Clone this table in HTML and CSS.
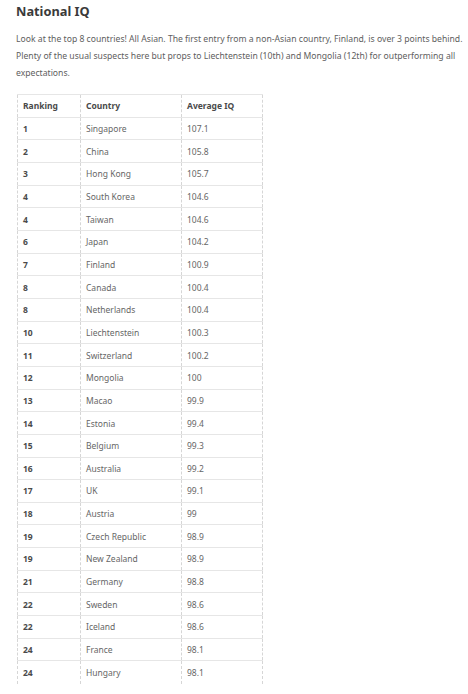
FILE: index.html
```html
<!DOCTYPE html>
<html>
<head>
<meta charset="utf-8">
<link rel="stylesheet" href="styles.css">
</head>
<body>
<div class="page">
<h1 class="title">National IQ</h1>
<p class="intro">Look at the top 8 countries! All Asian. The first entry from a non-Asian country, Finland, is over 3 points behind. Plenty of the usual suspects here but props to Liechtenstein (10th) and Mongolia (12th) for outperforming all expectations.</p>
<table class="iq">
<thead><tr><th class="c1">Ranking</th><th class="c2">Country</th><th class="c3">Average IQ</th></tr></thead>
<tbody>
<tr><td class="rank">1</td><td>Singapore</td><td>107.1</td></tr>
<tr><td class="rank">2</td><td>China</td><td>105.8</td></tr>
<tr><td class="rank">3</td><td>Hong Kong</td><td>105.7</td></tr>
<tr><td class="rank">4</td><td>South Korea</td><td>104.6</td></tr>
<tr><td class="rank">4</td><td>Taiwan</td><td>104.6</td></tr>
<tr><td class="rank">6</td><td>Japan</td><td>104.2</td></tr>
<tr><td class="rank">7</td><td>Finland</td><td>100.9</td></tr>
<tr><td class="rank">8</td><td>Canada</td><td>100.4</td></tr>
<tr><td class="rank">8</td><td>Netherlands</td><td>100.4</td></tr>
<tr><td class="rank">10</td><td>Liechtenstein</td><td>100.3</td></tr>
<tr><td class="rank">11</td><td>Switzerland</td><td>100.2</td></tr>
<tr><td class="rank">12</td><td>Mongolia</td><td>100</td></tr>
<tr><td class="rank">13</td><td>Macao</td><td>99.9</td></tr>
<tr><td class="rank">14</td><td>Estonia</td><td>99.4</td></tr>
<tr><td class="rank">15</td><td>Belgium</td><td>99.3</td></tr>
<tr><td class="rank">16</td><td>Australia</td><td>99.2</td></tr>
<tr><td class="rank">17</td><td>UK</td><td>99.1</td></tr>
<tr><td class="rank">18</td><td>Austria</td><td>99</td></tr>
<tr><td class="rank">19</td><td>Czech Republic</td><td>98.9</td></tr>
<tr><td class="rank">19</td><td>New Zealand</td><td>98.9</td></tr>
<tr><td class="rank">21</td><td>Germany</td><td>98.8</td></tr>
<tr><td class="rank">22</td><td>Sweden</td><td>98.6</td></tr>
<tr><td class="rank">22</td><td>Iceland</td><td>98.6</td></tr>
<tr><td class="rank">24</td><td>France</td><td>98.1</td></tr>
<tr class="last"><td class="rank">24</td><td>Hungary</td><td>98.1</td></tr>
</tbody>
</table>
</div>
</body>
</html>
```
FILE: styles.css
```css
html, body { margin: 0; padding: 0; background: #fff; }
.page {
  padding: 1px 0 0 16px;
  font-family: "Noto Sans", "Open Sans", sans-serif;
  color: #555;
}
.title {
  margin: 0;
  font-size: 12.8px;
  line-height: 20px;
  font-weight: 700;
  color: #3a3a3a;
}
.intro {
  margin: 10px 0 0 0;
  width: 452px;
  font-size: 8.65px;
  line-height: 17px;
  color: #606060;
}
.iq {
  margin: 12px 0 0 1px;
  border-collapse: collapse;
  table-layout: fixed;
  width: 245px;
  font-size: 8.5px;
}
.iq th, .iq td {
  height: 22.67px;
  padding: 0 0 0 5px;
  box-sizing: border-box;
  text-align: left;
  border-left: 1px dashed #d6d6d6;
  border-right: 1px dashed #d6d6d6;
  border-top: 1px solid #e6e6e6;
  vertical-align: middle;
}
.iq th { color: #4a4a4a; font-weight: 700; }
.iq .c1 { width: 63px; }
.iq .c2 { width: 101px; }
.iq .c3 { width: 81px; }
.iq td { color: #666; }
.iq td.rank { font-weight: 700; color: #4a4a4a; }
```
